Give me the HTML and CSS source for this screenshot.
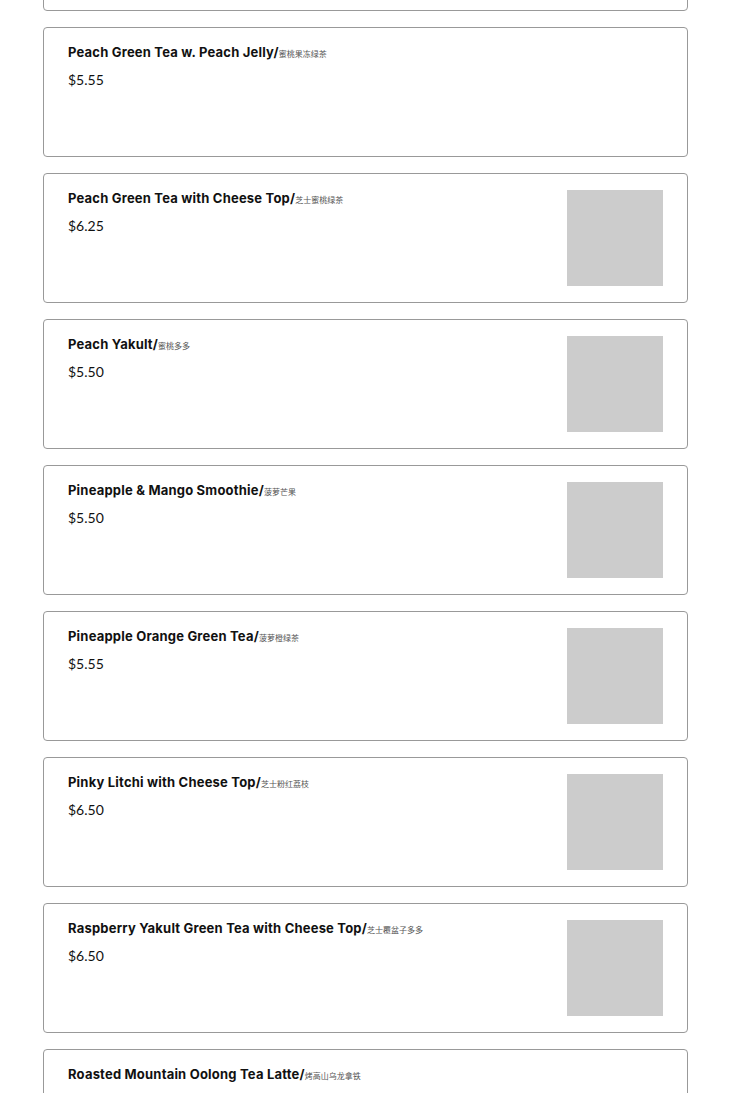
FILE: index.html
```html
<!DOCTYPE html>
<html lang="en">
<head>
<meta charset="utf-8">
<title>Menu</title>
<link rel="stylesheet" href="styles.css">
</head>
<body>
<main class="menu">
  <article class="item item-stub"></article>
  <article class="item"><div class="info"><h3 class="name">Peach Green Tea w. Peach Jelly/<span class="zh">蜜桃果冻绿茶</span></h3><p class="price">$5.55</p></div></article>
  <article class="item"><div class="info"><h3 class="name">Peach Green Tea with Cheese Top/<span class="zh">芝士蜜桃绿茶</span></h3><p class="price">$6.25</p></div><div class="thumb"></div></article>
  <article class="item"><div class="info"><h3 class="name">Peach Yakult/<span class="zh">蜜桃多多</span></h3><p class="price">$5.50</p></div><div class="thumb"></div></article>
  <article class="item"><div class="info"><h3 class="name">Pineapple &amp; Mango Smoothie/<span class="zh">菠萝芒果</span></h3><p class="price">$5.50</p></div><div class="thumb"></div></article>
  <article class="item"><div class="info"><h3 class="name">Pineapple Orange Green Tea/<span class="zh">菠萝橙绿茶</span></h3><p class="price">$5.55</p></div><div class="thumb"></div></article>
  <article class="item"><div class="info"><h3 class="name">Pinky Litchi with Cheese Top/<span class="zh">芝士粉红荔枝</span></h3><p class="price">$6.50</p></div><div class="thumb"></div></article>
  <article class="item"><div class="info"><h3 class="name">Raspberry Yakult Green Tea with Cheese Top/<span class="zh">芝士覆盆子多多</span></h3><p class="price">$6.50</p></div><div class="thumb"></div></article>
  <article class="item"><div class="info"><h3 class="name">Roasted Mountain Oolong Tea Latte/<span class="zh">烤高山乌龙拿铁</span></h3><p class="price">$6.50</p></div></article>
</main>
</body>
</html>
```
FILE: styles.css
```css
html, body {
  margin: 0;
  padding: 0;
  background: #fff;
  overflow: hidden;
}
body {
  font-family: Inter, "Noto Sans CJK SC", sans-serif;
  color: #111;
}
.menu {
  display: flex;
  flex-direction: column;
  gap: 16px;
  padding: 0 42px 0 43px;
  margin-top: -119px;
}
.item {
  display: flex;
  justify-content: space-between;
  align-items: flex-start;
  min-height: 96px;
  padding: 16px 24px;
  border: 1px solid #999;
  border-radius: 4px;
}
.info {
  display: flex;
  flex-direction: column;
  gap: 8px;
}
.name {
  margin: 0;
  font-size: 13px;
  line-height: 16px;
  font-weight: 700;
  letter-spacing: 0.2px;
}
.zh {
  font-size: 8px;
  font-weight: 400;
  letter-spacing: 0;
  color: #555;
}
.price {
  margin: 0;
  font-family: Lato, sans-serif;
  font-size: 14px;
  line-height: 20px;
  font-weight: 400;
}
.thumb {
  width: 96px;
  height: 96px;
  flex: none;
  background: #ccc;
}
```
